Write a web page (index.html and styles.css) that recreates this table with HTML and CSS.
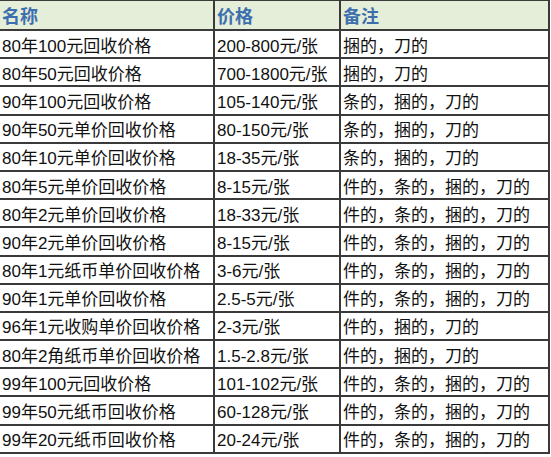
FILE: index.html
```html
<!DOCTYPE html>
<html lang="zh">
<head>
<meta charset="utf-8">
<title>纸币回收价格</title>
<link rel="stylesheet" href="styles.css">
</head>
<body>
<div class="sheet">
  <div class="cell head">名称</div><div class="cell head">价格</div><div class="cell head">备注</div>
  <div class="cell">80年100元回收价格</div><div class="cell">200-800元/张</div><div class="cell">捆的，刀的</div>
  <div class="cell">80年50元回收价格</div><div class="cell">700-1800元/张</div><div class="cell">捆的，刀的</div>
  <div class="cell">90年100元回收价格</div><div class="cell">105-140元/张</div><div class="cell">条的，捆的，刀的</div>
  <div class="cell">90年50元单价回收价格</div><div class="cell">80-150元/张</div><div class="cell">条的，捆的，刀的</div>
  <div class="cell">80年10元单价回收价格</div><div class="cell">18-35元/张</div><div class="cell">条的，捆的，刀的</div>
  <div class="cell">80年5元单价回收价格</div><div class="cell">8-15元/张</div><div class="cell">件的，条的，捆的，刀的</div>
  <div class="cell">80年2元单价回收价格</div><div class="cell">18-33元/张</div><div class="cell">件的，条的，捆的，刀的</div>
  <div class="cell">90年2元单价回收价格</div><div class="cell">8-15元/张</div><div class="cell">件的，条的，捆的，刀的</div>
  <div class="cell">80年1元纸币单价回收价格</div><div class="cell">3-6元/张</div><div class="cell">件的，条的，捆的，刀的</div>
  <div class="cell">90年1元单价回收价格</div><div class="cell">2.5-5元/张</div><div class="cell">件的，条的，捆的，刀的</div>
  <div class="cell">96年1元收购单价回收价格</div><div class="cell">2-3元/张</div><div class="cell">件的，捆的，刀的</div>
  <div class="cell">80年2角纸币单价回收价格</div><div class="cell">1.5-2.8元/张</div><div class="cell">件的，捆的，刀的</div>
  <div class="cell">99年100元回收价格</div><div class="cell">101-102元/张</div><div class="cell">件的，条的，捆的，刀的</div>
  <div class="cell">99年50元纸币回收价格</div><div class="cell">60-128元/张</div><div class="cell">件的，条的，捆的，刀的</div>
  <div class="cell">99年20元纸币回收价格</div><div class="cell">20-24元/张</div><div class="cell">件的，条的，捆的，刀的</div>
</div>
</body>
</html>
```

FILE: styles.css
```css
html, body {
  margin: 0;
  padding: 0;
  background: #ffffff;
}
.sheet {
  display: grid;
  grid-template-columns: 213px 124px 207px;
  grid-template-rows: 28px repeat(15, 26.2px);
  gap: 2px;
  padding: 1px 2px 2px 0;
  width: 548px;
  background: #3a3a3a;
  font-family: "Liberation Sans", "Noto Sans CJK SC", sans-serif;
  font-size: 17px;
  color: #111111;
}
.cell {
  background: #ffffff;
  display: flex;
  align-items: center;
  padding-left: 2px;
  white-space: nowrap;
  overflow: hidden;
}
.head {
  background: #e4eed8;
  color: #3d6fae;
  font-weight: bold;
  font-size: 18px;
}
```
